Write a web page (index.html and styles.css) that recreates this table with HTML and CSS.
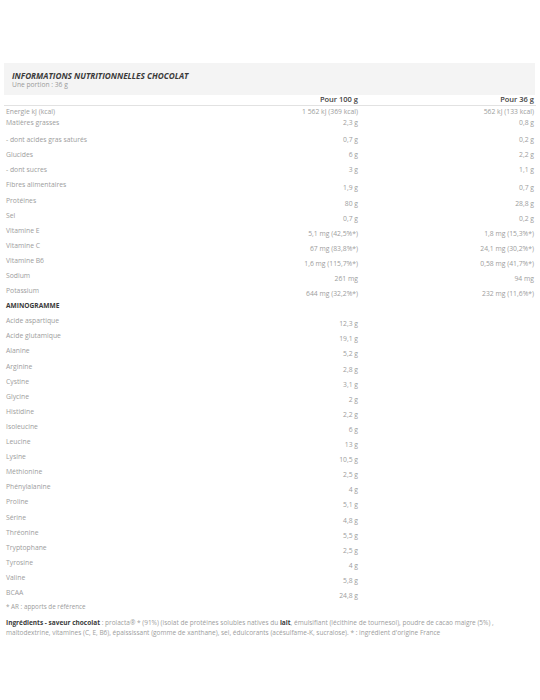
FILE: index.html
```html
<!DOCTYPE html>
<html lang="fr">
<head>
<meta charset="utf-8">
<title>Informations nutritionnelles</title>
<link rel="stylesheet" href="styles.css">
</head>
<body>
<div class="wrap">
  <div class="head">
    <div class="title">INFORMATIONS NUTRITIONNELLES CHOCOLAT</div>
    <div class="sub">Une portion : 36 g</div>
  </div>
  <div class="row thead"><span></span><span class="v">Pour 100 g</span><span class="v">Pour 36 g</span></div>
  <div class="row r1"><span>Energie kJ (kcal)</span><span class="v">1 562 kJ (369 kcal)</span><span class="v">562 kJ (133 kcal)</span></div>
  <div class="row r1"><span>Matières grasses</span><span class="v">2,3 g</span><span class="v">0,8 g</span></div>
  <div class="row gap"><span>- dont acides gras saturés</span><span class="v">0,7 g</span><span class="v">0,2 g</span></div>
  <div class="row"><span>Glucides</span><span class="v">6 g</span><span class="v">2,2 g</span></div>
  <div class="row"><span>- dont sucres</span><span class="v">3 g</span><span class="v">1,1 g</span></div>
  <div class="row low"><span>Fibres alimentaires</span><span class="v">1,9 g</span><span class="v">0,7 g</span></div>
  <div class="row low"><span>Protéines</span><span class="v">80 g</span><span class="v">28,8 g</span></div>
  <div class="row low"><span>Sel</span><span class="v">0,7 g</span><span class="v">0,2 g</span></div>
  <div class="row low"><span>Vitamine E</span><span class="v">5,1 mg (42,5%*)</span><span class="v">1,8 mg (15,3%*)</span></div>
  <div class="row low"><span>Vitamine C</span><span class="v">67 mg (83,8%*)</span><span class="v">24,1 mg (30,2%*)</span></div>
  <div class="row low"><span>Vitamine B6</span><span class="v">1,6 mg (115,7%*)</span><span class="v">0,58 mg (41,7%*)</span></div>
  <div class="row low"><span>Sodium</span><span class="v">261 mg</span><span class="v">94 mg</span></div>
  <div class="row low"><span>Potassium</span><span class="v">644 mg (32,2%*)</span><span class="v">232 mg (11,6%*)</span></div>
  <div class="row"><span class="strong">AMINOGRAMME</span><span></span><span></span></div>
  <div class="row low"><span>Acide aspartique</span><span class="v">12,3 g</span><span></span></div>
  <div class="row low"><span>Acide glutamique</span><span class="v">19,1 g</span><span></span></div>
  <div class="row low"><span>Alanine</span><span class="v">5,2 g</span><span></span></div>
  <div class="row low"><span>Arginine</span><span class="v">2,8 g</span><span></span></div>
  <div class="row low"><span>Cystine</span><span class="v">3,1 g</span><span></span></div>
  <div class="row low"><span>Glycine</span><span class="v">2 g</span><span></span></div>
  <div class="row low"><span>Histidine</span><span class="v">2,2 g</span><span></span></div>
  <div class="row low"><span>Isoleucine</span><span class="v">6 g</span><span></span></div>
  <div class="row low"><span>Leucine</span><span class="v">13 g</span><span></span></div>
  <div class="row low"><span>Lysine</span><span class="v">10,5 g</span><span></span></div>
  <div class="row low"><span>Méthionine</span><span class="v">2,5 g</span><span></span></div>
  <div class="row low"><span>Phénylalanine</span><span class="v">4 g</span><span></span></div>
  <div class="row low"><span>Proline</span><span class="v">5,1 g</span><span></span></div>
  <div class="row low"><span>Sérine</span><span class="v">4,8 g</span><span></span></div>
  <div class="row low"><span>Thréonine</span><span class="v">5,5 g</span><span></span></div>
  <div class="row low"><span>Tryptophane</span><span class="v">2,5 g</span><span></span></div>
  <div class="row low"><span>Tyrosine</span><span class="v">4 g</span><span></span></div>
  <div class="row low"><span>Valine</span><span class="v">5,8 g</span><span></span></div>
  <div class="row low"><span>BCAA</span><span class="v">24,8 g</span><span></span></div>
  <p class="note">* AR : apports de référence</p>
  <p class="ingr"><b>Ingrédients - saveur chocolat</b> : prolacta® * (91%) (isolat de protéines solubles natives du <b>lait</b>, émulsifiant (lécithine de tournesol), poudre de cacao maigre (5%) ,<br>maltodextrine, vitamines (C, E, B6), épaississant (gomme de xanthane), sel, édulcorants (acésulfame-K, sucralose). * : ingrédient d'origine France</p>
</div>
</body>
</html>
```

FILE: styles.css
```css
html, body {
  margin: 0;
  padding: 0;
  background: #ffffff;
}
body {
  font-family: "Open Sans", "Noto Sans", sans-serif;
  font-size: 6.8px;
  color: #9d9d9d;
}
.wrap {
  margin: 63px 4px 0 4px;
  width: 532px;
}
.head {
  background: #f4f4f4;
  height: 32px;
  box-sizing: border-box;
  padding: 7px 8px 0 8px;
  width: 531px;
}
.title {
  font-size: 8.2px;
  font-weight: 700;
  font-style: italic;
  color: #3a3a3a;
  line-height: 11px;
}
.sub {
  font-size: 6.7px;
  line-height: 8.5px;
  color: #9a9a9a;
}
.row {
  display: grid;
  grid-template-columns: 1fr 1fr 1fr;
  height: 15.1px;
  line-height: 15.1px;
  padding: 0 2px;
  white-space: nowrap;
}
.row .v {
  text-align: right;
}
.row.low .v {
  padding-top: 3px;
}
.row.thead {
  height: 9.5px;
  line-height: 9px;
  border-bottom: 1px solid #e2e2e2;
  color: #444444;
  font-weight: 600;
  font-size: 7.5px;
}
.row.r1 {
  height: 11.7px;
  line-height: 11.7px;
}
.row.gap {
  margin-top: 3.3px;
}
.strong {
  font-weight: 700;
  color: #3a3a3a;
  font-size: 6.6px;
}
.note {
  margin: 0;
  padding: 0 2px;
  line-height: 12px;
  margin-top: 1px;
  font-size: 6.3px;
}
.ingr {
  margin: 5px 0 0 0;
  padding: 0 2px;
  line-height: 9.5px;
  white-space: nowrap;
  font-size: 6.5px;
}
.ingr b {
  color: #3a3a3a;
  font-weight: 700;
}
```
